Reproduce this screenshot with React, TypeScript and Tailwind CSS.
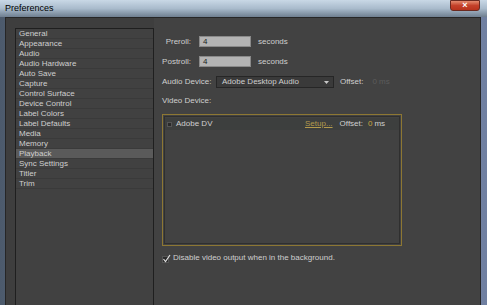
import React from "react"

const items = [
  "General",
  "Appearance",
  "Audio",
  "Audio Hardware",
  "Auto Save",
  "Capture",
  "Control Surface",
  "Device Control",
  "Label Colors",
  "Label Defaults",
  "Media",
  "Memory",
  "Playback",
  "Sync Settings",
  "Titler",
  "Trim",
]

function NumberRow({ label, value }: { label: string; value: string }) {
  return (
    <div className="flex items-center h-[11px]">
      <span className="w-[29px] text-right">{label}</span>
      <div className="ml-[8px] w-[52px] h-[11px] bg-[#b4b4b4] border border-[#8a8a8a] text-[#222] pl-[3px] leading-[9px]">
        {value}
      </div>
      <span className="ml-[7px]">seconds</span>
    </div>
  )
}

export default function App() {
  return (
    <div
      className="w-[487px] h-[305px] overflow-hidden relative flex flex-col bg-gradient-to-r from-[#4c5a6c] via-[#8e9db0] to-[#6f7fa0] text-[8px] text-[#cfcfcf]"
      style={{ fontFamily: '"Liberation Sans", Arial, sans-serif' }}
    >
      {/* title bar */}
      <div className="h-[17px] shrink-0 flex items-center pl-[5px] bg-gradient-to-b from-[#c9d8e6] via-[#a9bbcc] to-[#6f7f90]">
        <span className="text-[9px] text-black">Preferences</span>
      </div>
      <div className="absolute top-0 right-[7px] w-[30px] h-[11px] rounded-b-[3px] border border-[#6b2a20] bg-gradient-to-b from-[#e48a6e] via-[#c4412a] to-[#b8321c] flex items-center justify-center text-white text-[9px] font-bold leading-none">
        ×
      </div>

      {/* body */}
      <div className="flex-1 flex ml-[5px] mr-[6px] bg-[#3e3e3e] border-t border-l border-r border-[#262626] min-h-0">
        {/* category list */}
        <div className="ml-[9px] mt-[10px] w-[139px] h-[400px] shrink-0 bg-[#414141] border border-[#1f1f1f] flex flex-col">
          {items.map((it) => (
            <div
              key={it}
              className={`h-[10px] leading-[9px] pl-[3px] border-b border-[#3a3a3a] ${
                it === "Playback" ? "bg-[#5a5a5a]" : ""
              }`}
            >
              {it}
            </div>
          ))}
        </div>

        {/* settings */}
        <div className="flex-1 bg-[#424242] pl-[8px] pt-[18px] flex flex-col">
          <NumberRow label="Preroll:" value="4" />
          <div className="mt-[9px]">
            <NumberRow label="Postroll:" value="4" />
          </div>

          <div className="mt-[9px] flex items-center h-[12px]">
            <span className="w-[54px]">Audio Device:</span>
            <div className="w-[118px] h-[12px] bg-[#3a3a3a] border border-[#262626] flex items-center pl-[5px] pr-[4px]">
              <span className="flex-1">Adobe Desktop Audio</span>
              <svg width="5" height="3" viewBox="0 0 5 3">
                <path d="M0 0 L5 0 L2.5 3 Z" fill="#c8c8c8" />
              </svg>
            </div>
            <span className="ml-[6px]">Offset:</span>
            <span className="ml-[9px] text-[#5c5c5c]">0 ms</span>
          </div>

          <div className="mt-[8px] h-[10px] leading-[10px]">Video Device:</div>

          <div className="mt-[8px] w-[240px] h-[132px] border border-[#8d7733] p-px">
            <div className="w-full h-full border border-[#2f2f2f] pt-[1px]">
              <div className="h-[12px] flex items-center bg-[#3d3f3e] pl-[2px]">
                <div className="w-[5px] h-[5px] bg-[#2a2a2a] border border-[#555]" />
                <span className="ml-[4px] w-[129px]">Adobe DV</span>
                <span className="text-[#b39a4c] underline">Setup...</span>
                <span className="ml-[7px]">Offset:</span>
                <span className="ml-[5px] text-[#c9a640]">0</span>
                <span className="ml-[2px]">ms</span>
              </div>
            </div>
          </div>

          <div className="mt-[7px] flex items-center h-[10px]">
            <svg width="9" height="9" viewBox="0 0 9 9">
              <rect x="0.5" y="2.5" width="6" height="6" fill="#2a2a2a" stroke="#555" />
              <path d="M1.5 5 L3.5 7.5 L8 1" fill="none" stroke="#e0e0e0" strokeWidth="1.2" />
            </svg>
            <span className="ml-[2px]">Disable video output when in the background.</span>
          </div>
        </div>
      </div>
    </div>
  )
}
